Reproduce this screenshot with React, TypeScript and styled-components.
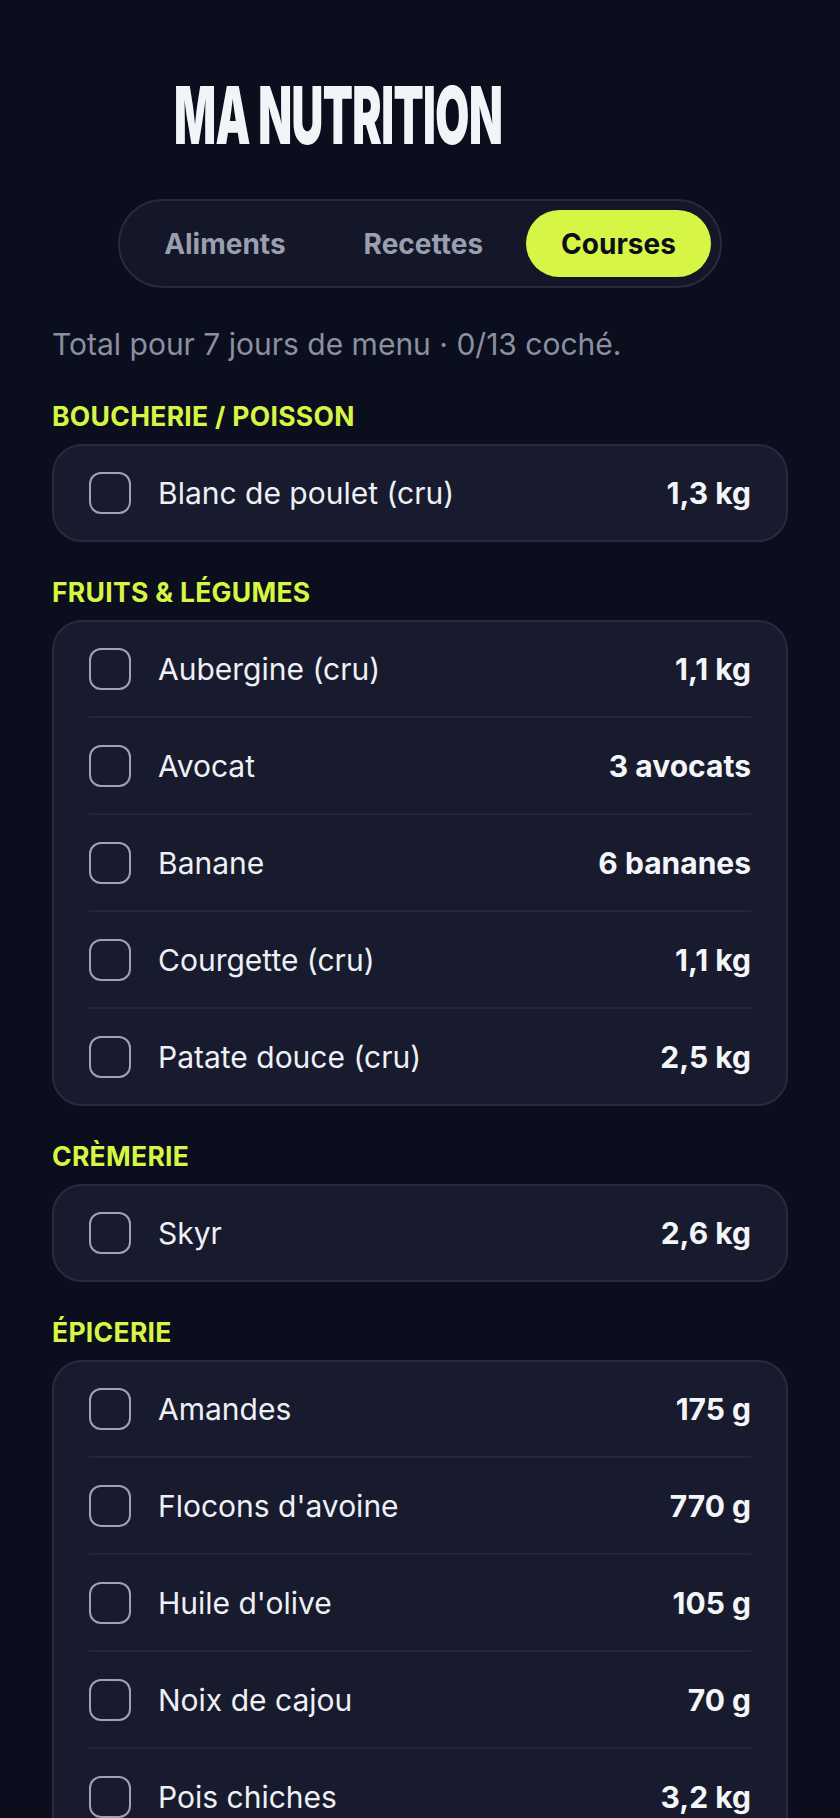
import React, { useState } from 'react';
import styled, { createGlobalStyle } from 'styled-components';

const GlobalStyle = createGlobalStyle`
    html, body {
        margin: 0;
        padding: 0;
        background: #0b0e1d;
    }
    body {
        font-family: Inter, 'Noto Sans', sans-serif;
        color: #f2f3f7;
        -webkit-font-smoothing: antialiased;
    }
`;

const Page = styled.div`
    min-height: 1818px;
    padding: 0 52px 60px;
    box-sizing: border-box;
    background: #0b0e1d;
`;

const Header = styled.header`
    padding: 70px 0 0 122px;
`;

const Title = styled.h1`
    margin: 0;
    font-family: Inter, sans-serif;
    font-weight: 900;
    font-size: 80px;
    line-height: 90px;
    letter-spacing: -1px;
    color: #f3f4f8;
    white-space: nowrap;
    transform: scaleX(0.55);
    transform-origin: left center;
`;

const TabsBar = styled.nav`
    display: flex;
    justify-content: center;
    margin-top: 39px;
`;

const Tabs = styled.div`
    display: flex;
    gap: 8px;
    padding: 9px;
    border: 2px solid #272b3e;
    border-radius: 999px;
    background: #131728;
`;

const Tab = styled.button<{ $active?: boolean }>`
    height: 67px;
    padding: 0 35px;
    border: none;
    border-radius: 999px;
    font-family: Inter, sans-serif;
    font-size: 28px;
    font-weight: 700;
    cursor: pointer;
    background: ${props => (props.$active ? '#d7f544' : 'transparent')};
    color: ${props => (props.$active ? '#0b0e1d' : '#9a9fb0')};
`;

const Summary = styled.p`
    margin: 38px 0 0;
    font-size: 30px;
    line-height: 36px;
    color: #8b90a1;
`;

const Section = styled.section`
    margin-top: 34px;

    &:first-of-type {
        margin-top: 38px;
    }
`;

const SectionLabel = styled.h2`
    margin: 0 0 12px;
    font-size: 26.5px;
    line-height: 32px;
    font-weight: 700;
    letter-spacing: 0.3px;
    color: #d7f544;
`;

const Card = styled.div`
    border: 2px solid #272b3e;
    border-radius: 30px;
    background: #171b2d;
    padding: 0 35px;
`;

const Row = styled.label`
    display: flex;
    align-items: center;
    height: 94px;
    cursor: pointer;

    & + & {
        height: 97px;
        box-sizing: border-box;
        padding-top: 1px;
        border-top: 2px solid #23273a;
    }
`;

const Box = styled.span<{ $checked?: boolean }>`
    flex: none;
    width: 42px;
    height: 42px;
    box-sizing: border-box;
    border: 2px solid #9ea3b4;
    border-radius: 12px;
    background: ${props => (props.$checked ? '#d7f544' : 'transparent')};
`;

const Name = styled.span<{ $checked?: boolean }>`
    flex: 1;
    margin-left: 27px;
    font-size: 30px;
    color: ${props => (props.$checked ? '#6b7080' : '#eef0f5')};
    text-decoration: ${props => (props.$checked ? 'line-through' : 'none')};
`;

const Qty = styled.span`
    font-size: 30px;
    font-weight: 700;
    color: #f4f5f8;
`;

type Item = { name: string; qty: string };

const sections: { title: string; items: Item[] }[] = [
    { title: 'Boucherie / Poisson', items: [{ name: 'Blanc de poulet (cru)', qty: '1,3 kg' }] },
    {
        title: 'Fruits & Légumes',
        items: [
            { name: 'Aubergine (cru)', qty: '1,1 kg' },
            { name: 'Avocat', qty: '3 avocats' },
            { name: 'Banane', qty: '6 bananes' },
            { name: 'Courgette (cru)', qty: '1,1 kg' },
            { name: 'Patate douce (cru)', qty: '2,5 kg' },
        ],
    },
    { title: 'Crèmerie', items: [{ name: 'Skyr', qty: '2,6 kg' }] },
    {
        title: 'Épicerie',
        items: [
            { name: 'Amandes', qty: '175 g' },
            { name: "Flocons d'avoine", qty: '770 g' },
            { name: "Huile d'olive", qty: '105 g' },
            { name: 'Noix de cajou', qty: '70 g' },
            { name: 'Pois chiches', qty: '3,2 kg' },
            { name: 'Riz basmati (cru)', qty: '490 g' },
        ],
    },
];

const tabs = ['Aliments', 'Recettes', 'Courses'];

const App = () => {
    const [activeTab, setActiveTab] = useState('Courses');
    const [checked, setChecked] = useState<Record<string, boolean>>({});
    const total = sections.reduce((n, s) => n + s.items.length, 0);
    const done = Object.values(checked).filter(Boolean).length;

    return (
        <>
            <GlobalStyle />
            <Page>
                <Header>
                    <Title>MA NUTRITION</Title>
                </Header>
                <TabsBar>
                    <Tabs>
                        {tabs.map(tab => (
                            <Tab key={tab} $active={tab === activeTab} onClick={() => setActiveTab(tab)}>
                                {tab}
                            </Tab>
                        ))}
                    </Tabs>
                </TabsBar>
                <Summary>
                    Total pour 7 jours de menu · {done}/{total} coché.
                </Summary>
                {sections.map(section => (
                    <Section key={section.title}>
                        <SectionLabel>{section.title.toUpperCase()}</SectionLabel>
                        <Card>
                            {section.items.map(item => (
                                <Row
                                    key={item.name}
                                    onClick={() =>
                                        setChecked(c => ({ ...c, [item.name]: !c[item.name] }))
                                    }
                                >
                                    <Box $checked={checked[item.name]} />
                                    <Name $checked={checked[item.name]}>{item.name}</Name>
                                    <Qty>{item.qty}</Qty>
                                </Row>
                            ))}
                        </Card>
                    </Section>
                ))}
            </Page>
        </>
    );
};

export default App;
